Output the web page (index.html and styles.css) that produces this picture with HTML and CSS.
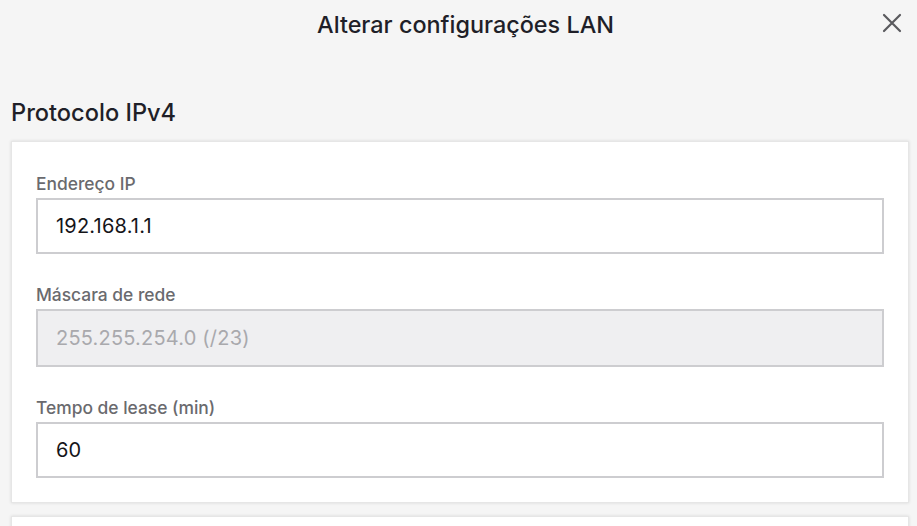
FILE: index.html
```
<!DOCTYPE html>
<html lang="pt">
<head>
<meta charset="utf-8">
<link rel="stylesheet" href="styles.css">
</head>
<body>
<header class="dialog-header">
  <h1 class="dialog-title">Alterar configurações LAN</h1>
  <button class="close-btn" aria-label="Fechar">
    <svg width="20" height="20" viewBox="0 0 20 20"><path d="M2 2 L18 18 M18 2 L2 18" stroke="#5a5a5e" stroke-width="2.2" stroke-linecap="round" fill="none"/></svg>
  </button>
</header>
<main class="content">
  <h2 class="section-title">Protocolo IPv4</h2>
  <section class="card">
    <div class="field">
      <label class="field-label">Endereço IP</label>
      <div class="input">192.168.1.1</div>
    </div>
    <div class="field">
      <label class="field-label">Máscara de rede</label>
      <div class="input input-disabled">255.255.254.0 (/23)</div>
    </div>
    <div class="field">
      <label class="field-label">Tempo de lease (min)</label>
      <div class="input">60</div>
    </div>
  </section>
  <section class="card card-next"></section>
</main>
</body>
</html>
```
FILE: styles.css
```
html, body {
  margin: 0;
  padding: 0;
  background: #f5f5f5;
  overflow: hidden;
  height: 526px;
}
body {
  font-family: "Inter", "Lato", sans-serif;
  color: #1e1e26;
}
.dialog-header {
  position: relative;
  height: 48px;
  padding-left: 14px;
  display: flex;
  align-items: center;
  justify-content: center;
}
.dialog-title {
  margin: 0;
  font-size: 23.4px;
  font-weight: 500;
  color: #1f1f28;
}
.close-btn {
  position: absolute;
  right: 14px;
  top: 12px;
  width: 22px;
  height: 22px;
  padding: 0;
  border: 0;
  background: transparent;
  display: flex;
  align-items: center;
  justify-content: center;
}
.content {
  padding: 0 8px 0 11px;
}
.section-title {
  margin: 50px 0 0 0;
  font-size: 23.6px;
  font-weight: 500;
  line-height: 30px;
  color: #1f1f28;
}
.card {
  margin-top: 13px;
  background: #fff;
  border: 1px solid #e6e6e6;
  box-shadow: 0 0 3px rgba(0,0,0,0.12);
  padding: 31px 24px 24px 24px;
  display: flex;
  flex-direction: column;
  gap: 30px;
}
.field {
  display: flex;
  flex-direction: column;
  gap: 3px;
}
.field-label {
  font-size: 17.4px;
  line-height: 22px;
  font-weight: 500;
  color: #6a6a6e;
}
.input {
  height: 52px;
  border: 2px solid #cdcdd0;
  background: #fff;
  padding: 0 18px;
  display: flex;
  align-items: center;
  font-size: 20px;
  letter-spacing: 0.2px;
  color: #151519;
}
.input-disabled {
  background: #efeff1;
  color: #a9a9ad;
  height: 54px;
}
.card-next {
  height: 40px;
  padding: 0;
}
```
